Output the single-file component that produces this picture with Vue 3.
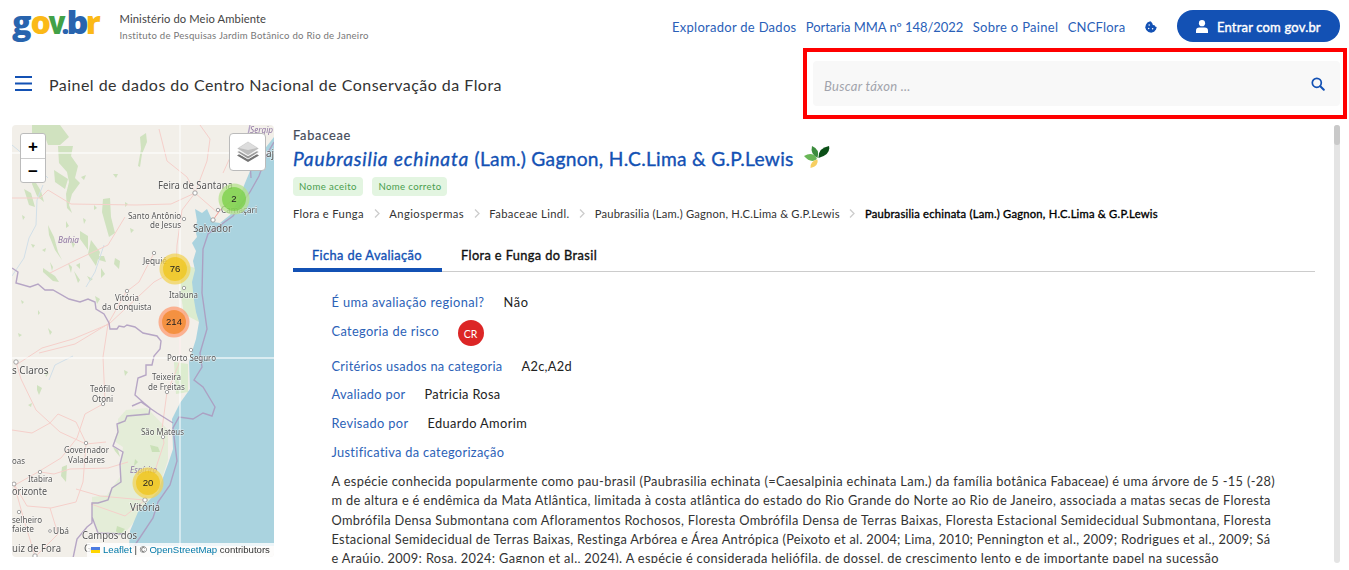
<script setup>
const links = [
  { t: 'Explorador de Dados', c: 'l1' },
  { t: 'Portaria MMA nº 148/2022', c: 'l2' },
  { t: 'Sobre o Painel', c: 'l3' },
  { t: 'CNCFlora', c: 'l4' },
]
const crumbs = [
  { t: 'Flora e Funga', c: 'c1' },
  { t: 'Angiospermas', c: 'c2' },
  { t: 'Fabaceae Lindl.', c: 'c1' },
  { t: 'Paubrasilia (Lam.) Gagnon, H.C.Lima & G.P.Lewis', c: 'c3' },
]
const fields = [
  { k: 'É uma avaliação regional?', v: 'Não', c: 'f1' },
  { k: 'Categoria de risco', v: 'CR', c: 'f2', risk: true },
  { k: 'Critérios usados na categoria', v: 'A2c,A2d', c: 'f3' },
  { k: 'Avaliado por', v: 'Patricia Rosa', c: 'f4' },
  { k: 'Revisado por', v: 'Eduardo Amorim', c: 'f5' },
  { k: 'Justificativa da categorização', v: '', c: 'f6' },
]
const lines = [
  'A espécie conhecida popularmente como pau-brasil (Paubrasilia echinata (=Caesalpinia echinata Lam.) da família botânica Fabaceae) é uma árvore de 5 -15 (-28)',
  'm de altura e é endêmica da Mata Atlântica, limitada à costa atlântica do estado do Rio Grande do Norte ao Rio de Janeiro, associada a matas secas de Floresta',
  'Ombrófila Densa Submontana com Afloramentos Rochosos, Floresta Ombrófila Densa de Terras Baixas, Floresta Estacional Semidecidual Submontana, Floresta',
  'Estacional Semidecidual de Terras Baixas, Restinga Arbórea e Área Antrópica (Peixoto et al. 2004; Lima, 2010; Pennington et al., 2009; Rodrigues et al., 2009; Sá',
  'e Araújo, 2009; Rosa, 2024; Gagnon et al., 2024). A espécie é considerada heliófila, de dossel, de crescimento lento e de importante papel na sucessão',
]
const cities = [
  { x: 158, y: 189, t: 'Feira de Santana', w: 75, s: 10 },
  { x: 193, y: 232, t: 'Salvador', w: 39, s: 10 },
  { x: 221, y: 213, t: 'Camaçari', w: 36, s: 8.5 },
  { x: 128, y: 218.5, t: 'Santo Antônio', w: 53, s: 8.5 },
  { x: 150, y: 228, t: 'de Jesus', w: 31, s: 8.5 },
  { x: 143, y: 264, t: 'Jequié', w: 24, s: 8.5 },
  { x: 115, y: 300.5, t: 'Vitória', w: 24, s: 8.5 },
  { x: 102, y: 310, t: 'da Conquista', w: 49.5, s: 8.5 },
  { x: 169, y: 298, t: 'Itabuna', w: 29, s: 8.5 },
  { x: 167, y: 360.5, t: 'Porto Seguro', w: 49, s: 8.5 },
  { x: 152, y: 380, t: 'Teixeira', w: 29, s: 8.5 },
  { x: 148, y: 389.5, t: 'de Freitas', w: 37, s: 8.5 },
  { x: 12, y: 374, t: 's Claros', w: 36.5, s: 10 },
  { x: 90, y: 392, t: 'Teófilo', w: 25, s: 8.5 },
  { x: 92, y: 401.5, t: 'Otoni', w: 21, s: 8.5 },
  { x: 141, y: 434.5, t: 'São Mateus', w: 43, s: 8.5 },
  { x: 64, y: 453, t: 'Governador', w: 45, s: 8.5 },
  { x: 68, y: 462.5, t: 'Valadares', w: 37, s: 8.5 },
  { x: 12, y: 463.5, t: 'oas', w: 13, s: 8.5 },
  { x: 28, y: 482, t: 'Itabira', w: 24.5, s: 8.5 },
  { x: 12, y: 495, t: 'orizonte', w: 35, s: 10 },
  { x: 12, y: 522.5, t: 'selheiro', w: 30, s: 8.5 },
  { x: 12, y: 532, t: 'faiete', w: 22, s: 8.5 },
  { x: 53, y: 534, t: 'Ubá', w: 16, s: 8.5 },
  { x: 130, y: 511, t: 'Vitória', w: 30, s: 10 },
  { x: 82, y: 539, t: 'Campos dos', w: 55, s: 10 },
  { x: 12, y: 552, t: 'uiz de Fora', w: 49, s: 10 },
]
const dots = [[195,193,2.2],[213,220,2.2],[184,219,1.7],[218,210,1.7],[154,253,1.7],[127,291,1.7],[184,288,1.7],[191,350,1.7],[167,392,1.7],[16,362,2.2],[103,404,1.7],[86,443,1.7],[163,437,1.7],[40,472,1.7],[14,484,2],[19,512,1.7],[50,531,1.4],[145,500,2.2],[35,556,2.2]]
const clusters = [
  { x: 234, y: 199, n: 2, o: '#b5e28c', i: '#6ecc39' },
  { x: 175, y: 269, n: 76, o: '#f1d357', i: '#f0c20c' },
  { x: 174, y: 322, n: 214, o: '#fd9c73', i: '#f18017' },
  { x: 148, y: 483, n: 20, o: '#f1d357', i: '#f0c20c' },
]
</script>

<template>
  <div class="page">
    <header class="top">
      <svg class="logo" width="92" height="36" viewBox="0 0 92 36">
        <g class="word">
          <text x="0" y="25" fill="#2864ae" textLength="19.5" lengthAdjust="spacingAndGlyphs">g</text>
          <text x="18.4" y="25" fill="#fbb917" textLength="20.500" lengthAdjust="spacingAndGlyphs">o</text>
          <text x="36.500" y="25" fill="#42a147" textLength="17" lengthAdjust="spacingAndGlyphs">v</text>
          <text x="54.5" y="25" fill="#2864ae" textLength="22" lengthAdjust="spacingAndGlyphs">b</text>
          <text x="73.8" y="25" fill="#fbb917" textLength="15" lengthAdjust="spacingAndGlyphs">r</text>
          <text class="dot" x="49.5" y="25" fill="#2864ae">.</text>
        </g>
      </svg>
      <div class="org">
        <div class="min">Ministério do Meio Ambiente</div>
        <div class="inst">Instituto de Pesquisas Jardim Botânico do Rio de Janeiro</div>
      </div>
      <nav class="links"><a v-for="l in links" :key="l.t" :class="l.c">{{ l.t }}</a></nav>
      <svg class="cookie" width="12" height="12" viewBox="0 0 12 12">
        <path fill="#1351b4" d="M5.2.3 2.4 1.4.9 3.8.2 6.4l1 2.7 2.2 1.8 2.8.8 2.9-1 1.9-2.1.7-2.6-1.5-.5-.6-1.2-1.7-.4-.6-1.7L6.100.8z" />
        <g fill="#fff"><circle cx="4.2" cy="4" r=".75" /><circle cx="3.700" cy="7.600" r=".75" /><circle cx="7.600" cy="7.700" r=".75" /></g>
      </svg>
      <button class="login">
        <svg width="12" height="13" viewBox="0 0 12 13"><circle cx="6" cy="3.200" r="3.100" fill="#fff" /><path fill="#fff" d="M0 13v-2.300Q0 7.500 3.400 7.500h5.200Q12 7.500 12 10.700V13z" /></svg>
        <span>Entrar com gov.br</span>
      </button>
    </header>

    <div class="bar">
      <svg class="menu" width="17" height="15" viewBox="0 0 17 15"><path d="M0 1h17M0 7.500h17M0 14h17" stroke="#1351b4" stroke-width="2" /></svg>
      <h1>Painel de dados do Centro Nacional de Conservação da Flora</h1>
      <div class="mark">
        <div class="search">
          <span>Buscar táxon ...</span>
          <svg width="14" height="14" viewBox="0 0 14 14" fill="none" stroke="#1351b4" stroke-linecap="round"><circle cx="5.800" cy="5.800" r="4.500" stroke-width="1.700" /><path d="m9.300 9.300 3.500 3.500" stroke-width="2" /></svg>
        </div>
      </div>
    </div>

    <main>
      <div class="map">
        <svg width="262" height="432" viewBox="12 125 262 432">
          <rect x="12" y="125" width="262" height="432" fill="#f2efe9" />
          <g fill="#d5ebc6" opacity=".75">
            <path d="M168 430 147 408 126 410 118 419 118 430 114 441 123 447 120 477 107 495 92 497 92 517 98 532 124 534 134 522 153 502 163 475 168 460z" opacity=".65" />
            <path d="m182 264 13 4 0 26 4 28-15-8-4-24zM174 362l14 2 0 28-12 2z" />
          </g>
          <g fill="#b9d9a4" opacity=".6">
            <path d="m32 125 28 0 9 12-9 8-12 0-4-11-12-1zM58 146l15 0-2 10 7 10-3 12 5 5-8 11-3 11 3 8-5-5-1-14 3-12-2-10-8-9zM140 137l6-4 1 9-5 12-2 13-2-1 3-17zM54 170l14 9-3 10-10-7zM103 199l7-1 1 19 4 16-6 4-7-25zM48 225l6 12 4 15 4 8-7-10-6-15zM80 231l8 5 0 14-8-11zM91 240l9 12-4 14-8-12zM33 178l8 13 3 11-7-6-5-12zM24 189l7 4 4 14-6-2zM43 268l12 8 4 6-6-1-10-9zM62 467l5-2-1 17-5-6zM150 445l8 2 2 5-8 0zM37 385l5 3-3 7-2-5zM113 447l5 3 2 7-5-6zM117 526l8 3-6 7-3-5zM96 256l8 0 2 6-7-2zM115 258l5 3-1 8-5-5z" />
            <path d="m48 328 4 4-2 3zM21 300l3 2-2 2zM71 241l4 3-2 4zM81 177l5-2-2 5zM113 174l5 0-2 4zM42 250l4-2-1 4zM95 296l5 3-3 5zM130 228l4 2-3 3zM76 265l4-2 0 6zM18 333l4 2-3 2zM45 371l4 2-3 4zM28 405l4-2-1 4zM31 244l4 1-2 3zM125 202l3 2-3 3zM87 276l6 3-3 2zM124 370l4 2-3 4zM135 459l3 3-4 4zM142 427l3 1-2 4zM68 263l4 4-1 6zM74 271l6 9-2 3zM101 268l4 6-4 4zM50 262l3 5-1 4zM38 310l2 3-2 2zM94 205l3 3-3 2zM22 215l3 2-2 3zM66 221l3 5-3 2zM83 218l3 2-2 4z" />
          </g>
          <g fill="none" stroke="#d1dfe8" stroke-width="1"><path d="m43 185-6 15-1 25-7 13-5 20-12 18M12 145l18 15 18 18M73 356l-18 9-6 15M104 245l-9 27-9 15" /></g>
          <g fill="none" stroke="#f5cfca" stroke-width="1">
            <path d="M12 198h28l8-8 23 14 65 1 35-1 24-11 12-32 3-22-10-14M195 193l23 20-5 7M195 193l-13 17-5 35-1 25-22 12-45 42-36 15-31 9-26 17M154 253l-15 29-13 10-18 32-5 33 2 44M108 324l-33 20-36 9M159 129l8 32 20 16 8 15M50 273l24-12 34-16 17-28M16 362l5 17 15 31 24 22 26 12 20-2M103 404l-18 10-8 24-16 20-23 14-23 13M14 484l13 22 24 2 25-6 7-20 3-38M167 392l-5 37 2 14-13 40-7 17-44-4-24-7M14 484l10 36 11 36M12 430l20 3 18-10 8-9 18 8 10 21M40 472l14 2 16-5 38-1 20-6M180 322l0 39-13 32M50 508l8 26-22 22M91 504l34 12 20-16M223 173l10-22 22-16" />
            <path d="m213 220 8-11 18-14" stroke="#f5a9a2" />
          </g>
          <path fill="#aad3df" d="m274 137-11 14-10 13-8 19-7 18-8 14-10 8-7-1-6-13-5 4-7-4 2 12-2 8 2 8-5 6 4 8-3 10 2 9-3 12 2 18 2 12 3 10-3 17-7 22 1 28-10 14-8 16 1 30-5 15-10 27-20 21-8 19-1 15h151z" />
          <g fill="none" stroke="#ac99bf" stroke-width="1.400" opacity=".85">
            <path d="m12 268 6 4-2 11 14 4 8-3 7 6 8 0 16 9 11 3 8-3 7 3 1 7 8 5 5 9 1 6 7 0 2-3 5 1 3-2 8 2 8 6 14 3 4 5-1 8-6 7-2 9-6 0 0 10-8 3-3 17 9 8 6 5-1 6-22 2-2 5-8 3 1 8-5 14 10 6-3 12 1 18-9 6-4 12-10 3-6 0 0 20-5 4-10 12-5 24M132 406l9-4 16 11 16 10M92 517l6 16 26 1" />
            <path d="m274 142-7 12-8 22-9 16-17 24-25 18-5 15-1 44 5 36-7 24 2 14-8 13 9 7 12 20-3 9-9-3-10 6-14-2-6 11 4 33-7 24-12 17-5 16-20 30M250 125l-2 10-11 1-3 7 5 6 3-5 10-1 4 8-6 11 1 16" />
          </g>
          <path d="M180 125v432M12 153h262M12 358h262" stroke="#fff" stroke-width="1.300" opacity=".75" />
          <g fill="#fff" stroke="#999" stroke-width=".9"><circle v-for="(d, i) in dots" :key="i" :cx="d[0]" :cy="d[1]" :r="d[2]" /></g>
          <g class="places">
            <text v-for="c in cities" :key="c.x + '-' + c.y" :x="c.x" :y="c.y" :font-size="c.s" :textLength="c.w" lengthAdjust="spacingAndGlyphs">{{ c.t }}</text>
            <text x="84" y="552" font-size="10">G</text>
            <text x="266" y="157" font-size="10">aj</text>
          </g>
          <g class="states">
            <text x="58" y="243" textLength="21" lengthAdjust="spacingAndGlyphs">Bahia</text>
            <text x="250" y="133" textLength="23" lengthAdjust="spacingAndGlyphs">Sergip</text>
            <text x="130" y="473" textLength="27" lengthAdjust="spacingAndGlyphs">Espírito</text>
          </g>
          <g v-for="c in clusters" :key="c.n" class="cluster">
            <circle :cx="c.x" :cy="c.y" r="15.500" :fill="c.o" opacity=".75" />
            <circle :cx="c.x" :cy="c.y" r="12" :fill="c.i" opacity=".65" />
            <text :x="c.x" :y="c.y + 3.200">{{ c.n }}</text>
          </g>
        </svg>
        <div class="zoomer"><span>+</span><span>−</span></div>
        <div class="layers">
          <svg width="22" height="22" viewBox="0 0 22 22"><path fill="#747474" d="m0 14.500 2-1.200 9 5 9-5 2 1.200L11 21z" /><path fill="#999" stroke="#fff" stroke-width=".7" d="m0 11 2-1.200 9 5 9-5 2 1.200-11 7z" /><path fill="#bdbdbd" stroke="#fff" stroke-width=".5" d="m0 7.500 11-7 11 7-11 7z" /><path fill="#ddd" d="m2 7 9-6 9 6-9 2z" /></svg>
        </div>
        <div class="attr">
          <svg width="9" height="6" viewBox="0 0 9 6"><path fill="#4c7be1" d="M0 0h9v3H0z" /><path fill="#ffd500" d="M0 3h9v3H0z" /></svg>
          <span><a>Leaflet</a> | © <a>OpenStreetMap</a> contributors</span>
        </div>
      </div>

      <section class="detail">
        <div class="family">Fabaceae</div>
        <h2><i>Paubrasilia echinata</i><span>(Lam.) Gagnon, H.C.Lima &amp; G.P.Lewis</span>
          <svg width="26" height="24" viewBox="0 0 26 24"><path fill="#3c8c3e" d="M8 1Q16 4 13.500 13 6 9 8 1z" /><path fill="#0b4f17" d="M25 1Q27 10 14.500 13 14 3 25 1z" /><path fill="#69b657" d="M0 11Q9 6 13 14 7 19 0 11z" /><path fill="#f7cf61" d="M13.500 14.500Q15 21 6.500 23 6 16 13.500 14.500z" /></svg>
        </h2>
        <div class="tags"><span>Nome aceito</span><span>Nome correto</span></div>
        <div class="crumbs">
          <template v-for="c in crumbs" :key="c.t">
            <span :class="c.c">{{ c.t }}</span>
            <svg width="6" height="9" viewBox="0 0 6 9"><path d="m1 .5 4 4-4 4" fill="none" stroke="#ccc" stroke-width="1.300" /></svg>
          </template>
          <b>Paubrasilia echinata (Lam.) Gagnon, H.C.Lima &amp; G.P.Lewis</b>
        </div>
        <div class="tabs"><span class="on">Ficha de Avaliação</span><span>Flora e Funga do Brasil</span></div>
        <div class="sheet">
          <div v-for="f in fields" :key="f.k" class="field" :class="f.c">
            <label>{{ f.k }}</label><span :class="{ risk: f.risk }">{{ f.v }}</span>
          </div>
          <p><span v-for="(l, i) in lines" :key="i" :class="'p' + i">{{ l }}</span></p>
        </div>
      </section>
      <div class="scroll"><div></div></div>
    </main>
  </div>
</template>

<style>
body { background: #fff; overflow: hidden; }
</style>
<style scoped>
* { box-sizing: border-box; }
.page { width: 1349px; height: 570px; font-family: Lato, sans-serif; color: #333; white-space: nowrap; overflow: hidden; }
.top { height: 48px; display: flex; align-items: flex-start; padding: 9px 9px 0 12px; }
.logo { flex: none; width: 92px; overflow: visible; }
.word { font: 800 32px "Open Sans", sans-serif; }
.dot { font-size: 27px; }
.org { margin-left: 15.5px; width: 552.5px; }
.min { font-size: 11.2px; line-height: 20px; letter-spacing: .12px; color: #444; }
.inst { font-size: 9.6px; line-height: 14px; letter-spacing: .24px; color: #777; }
.links { display: flex; gap: 9.3px; font-size: 13px; line-height: 37px; color: #2a60b8; width: 473px; }
.l1 { letter-spacing: .28px; } .l2 { letter-spacing: -.039px; } .l3 { letter-spacing: .31px; } .l4 { letter-spacing: .2px; }
.cookie { margin-top: 12px; flex: none; }
.login { margin: 1px 0 0 auto; flex: none; width: 163px; height: 32px; border: 0; border-radius: 16px; background: #1351b4; color: #fff; display: flex; align-items: center; padding: 0 0 0 19px; gap: 9px; font: 400 13px Lato, sans-serif; letter-spacing: .18px; -webkit-text-stroke: .4px #fff; }
.login span { padding-top: 2px; }
.bar { height: 77px; display: flex; align-items: flex-start; padding-left: 15px; }
.menu { margin-top: 28px; flex: none; }
h1 { margin: 26px 0 0 17px; font-size: 16px; font-weight: 400; line-height: 21px; letter-spacing: .468px; width: 754px; }
.mark { width: 544px; height: 71px; border: 4px solid #f00; padding: 9px 3px 9px 6px; flex: none; }
.search { height: 45px; background: #f8f8f8; border-radius: 4px; display: flex; align-items: center; justify-content: space-between; padding: 0 15px 0 11px; font-size: 13px; font-style: italic; letter-spacing: .286px; color: #a2a4ac; }
.search span { padding-top: 4px; }
main { display: flex; padding: 0 9px 0 12px; height: 438px; }
.map { position: relative; width: 262px; height: 432px; border-radius: 4px; overflow: hidden; flex: none; }
.map > svg { display: block; }
.places { font-family: "Noto Sans", sans-serif; fill: #555; stroke: #fff; stroke-width: 1.2px; stroke-opacity: .6; paint-order: stroke; }
.states { font: italic 8.5px "Noto Sans", sans-serif; fill: #9077a4; }
.cluster text { font: 9.6px "Liberation Sans", sans-serif; text-anchor: middle; fill: #222; }
.zoomer { position: absolute; left: 8px; top: 8px; width: 26px; height: 50px; border: 1px solid #bbb; border-radius: 3px; background: #fff; display: flex; flex-direction: column; font: bold 17px/26px "Liberation Sans", sans-serif; text-align: center; color: #000; }
.zoomer span { height: 24px; }
.zoomer span + span { border-top: 1px solid #ccc; }
.layers { position: absolute; left: 217px; top: 8px; width: 37px; height: 38px; border: 1px solid #bbb; border-radius: 4px; background: #fff; display: flex; align-items: center; justify-content: center; }
.attr { position: absolute; right: 0; bottom: 0; height: 14px; width: 187px; background: rgba(255,255,255,.8); font: 9.6px/14px "Liberation Sans", sans-serif; padding-left: 4px; display: flex; align-items: center; gap: 3px; }
.attr a { color: #0078a8; }
.detail { margin-left: 19px; width: 1022px; overflow: hidden; height: 438px; }
.family { font-size: 12.8px; line-height: 21px; letter-spacing: .74px; color: #444b5a; -webkit-text-stroke: .2px; }
h2 { margin: 0; height: 31px; display: flex; font-size: 19.2px; font-weight: 400; line-height: 26px; color: #1351b4; -webkit-text-stroke: .35px; }
h2 i { letter-spacing: .803px; width: 181.5px; }
h2 span { letter-spacing: .288px; width: 329.5px; }
h2 svg { -webkit-text-stroke: 0; margin-top: -1px; }
.tags { display: flex; gap: 9px; height: 19px; }
.tags span { background: #e3f5e1; border-radius: 4px; color: #4a9e4e; font-size: 9.6px; line-height: 20px; padding: 0 6px; letter-spacing: .4px; }
.tags span:first-child { width: 70px; }
.tags span:last-child { width: 75px; letter-spacing: .363px; padding-left: 6.5px; }
.crumbs { display: flex; align-items: center; height: 35px; gap: 9.6px; font-size: 11.2px; color: #333; }
.c1 { letter-spacing: .37px; } .c2 { letter-spacing: .472px; } .c3 { letter-spacing: .199px; }
.crumbs b { font-weight: 400; letter-spacing: .23px; color: #000; -webkit-text-stroke: .35px; }
.tabs { display: flex; height: 33px; margin: 8px 0 16px; border-bottom: 1px solid #ccc; font-size: 12.8px; color: #111; line-height: 32px; -webkit-text-stroke: .35px; letter-spacing: .38px; }
.tabs span { padding: 0 19px; height: 33px; }
.tabs .on { width: 149px; color: #1351b4; border-bottom: 4px solid #1351b4; padding-right: 0; }
.sheet { padding-left: 38.5px; font-size: 12.8px; }
.field { height: 28.8px; display: flex; gap: 19px; line-height: 28px; }
.field label { color: #2c62b7; }
.field > span { color: #222; }
.f1 label { letter-spacing: .406px; } .f1 span { letter-spacing: .6px; }
.f2 { height: 35.5px; } .f2 label { letter-spacing: .36px; }
.f3 { height: 28px; } .f3 label { letter-spacing: .31px; } .f3 span { letter-spacing: .3px; }
.f4 label { letter-spacing: .316px; } .f4 span { letter-spacing: .335px; }
.f5 label { letter-spacing: .369px; } .f5 span { letter-spacing: .388px; }
.f6 label { letter-spacing: .32px; }
.field > .risk { width: 26px; height: 26px; margin: 3px 0 0 -.5px; border-radius: 50%; background: #dc2626; color: #fff; font-size: 10.5px; line-height: 28px; text-align: center; }
p { margin: 5.500px 0 0; line-height: 19.2px; color: #333; display: flex; flex-direction: column; }
.p0 { letter-spacing: .334px; } .p1 { letter-spacing: .342px; } .p2 { letter-spacing: .349px; } .p3 { letter-spacing: .29px; } .p4 { letter-spacing: .33px; }
.scroll { margin-left: auto; width: 6px; height: 438px; border-radius: 3px; background: #e4e4e4; }
.scroll div { width: 6px; height: 20px; border-radius: 3px; background: #c9c9c9; }
</style>
